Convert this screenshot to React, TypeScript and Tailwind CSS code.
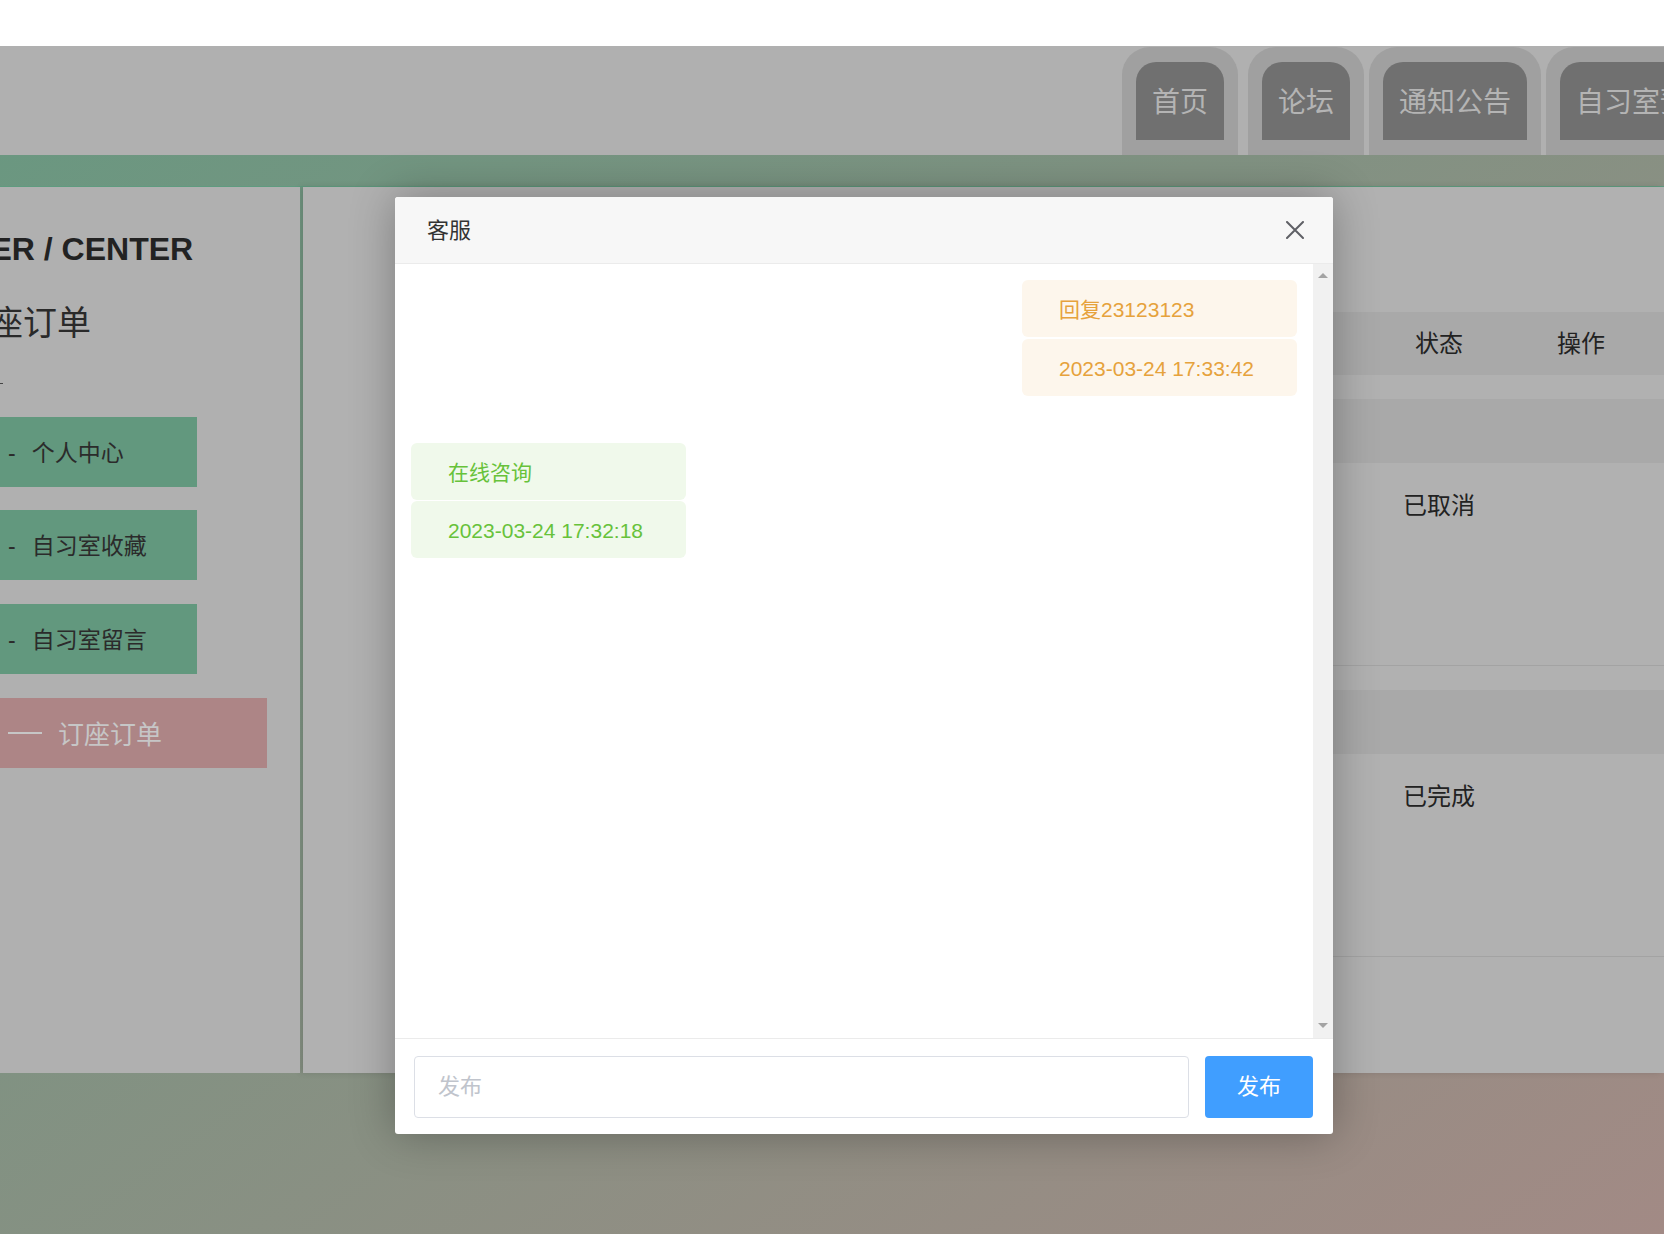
import React from "react";

function Tab({ label, first }: { label: string; first?: boolean }) {
  return (
    <div
      className={`shrink-0 h-[108px] bg-[#a0a0a0] rounded-t-[28px] px-[14px] pt-[15px] pb-[15px] ${first ? "mr-[5px]" : ""}`}
    >
      <div className="h-[78px] bg-[#707070] rounded-t-[20px] px-[16px] pt-[3px] flex items-center justify-center text-[28px] text-[#b4b4b4] whitespace-nowrap">
        {label}
      </div>
    </div>
  );
}

function MenuItem({ label, className = "" }: { label: string; className?: string }) {
  return (
    <div
      className={`h-[70px] w-[197px] bg-[#62987e] flex items-center pl-[8px] pt-[3px] text-[23px] text-[#2b2b2b] ${className}`}
    >
      <span className="leading-none">-</span>
      <span className="ml-[16px]">{label}</span>
    </div>
  );
}

function OrderRow({ status }: { status: string }) {
  return (
    <div className="mt-[24px]">
      <div className="h-[64px] bg-[#a9a9a9]" />
      <div className="h-[203px] border-b border-[#a3a3a3] flex justify-end pr-[12px] pt-[27px]">
        <div className="w-[142px] text-center text-[24px] leading-[32px] text-[#222]">{status}</div>
        <div className="w-[142px]" />
      </div>
    </div>
  );
}

function Bubble({ text, tone }: { text: string; tone: "orange" | "green" }) {
  const cls =
    tone === "orange"
      ? "bg-[#fdf6ec] text-[#e6a23c]"
      : "bg-[#f0f9eb] text-[#67c23a]";
  return (
    <div className={`w-[275px] rounded-[6px] px-[37px] pt-[17px] pb-[15px] text-[21px] leading-[25px] whitespace-nowrap ${cls}`}>
      {text}
    </div>
  );
}

export default function App() {
  return (
    <div className="relative w-[1664px] h-[1234px] overflow-hidden bg-[linear-gradient(to_bottom_right,#679880,#a28a85)] font-['Liberation_Sans','Noto_Sans_CJK_SC',sans-serif]">
      {/* top white strip */}
      <div className="h-[46px] bg-white" />

      {/* header with tabs */}
      <header className="h-[109px] bg-[#b0b0b0] flex items-end pl-[1122px] gap-[5px] overflow-hidden">
        <Tab label="首页" first />
        <Tab label="论坛" />
        <Tab label="通知公告" />
        <Tab label="自习室预约" />
      </header>

      {/* green band */}
      <div className="h-[32px] border-b border-[#5f9b7f]" />

      {/* content */}
      <div className="flex h-[886px]">
        <aside className="relative w-[300px] shrink-0 bg-[#b0b0b0] overflow-hidden flex flex-col">
          <div className="mt-[44px] ml-[-54px] text-[32px] leading-[36px] font-bold text-[#222] whitespace-nowrap">
            USER / CENTER
          </div>
          <div className="mt-[36px] ml-[-45px] text-[34px] leading-[40px] text-[#2a2a2a] whitespace-nowrap">
            订座订单
          </div>
          <div className="mt-[40px] h-[1px] w-[3px] bg-[#444]" />
          <MenuItem label="个人中心" className="mt-[33px]" />
          <MenuItem label="自习室收藏" className="mt-[23px]" />
          <MenuItem label="自习室留言" className="mt-[24px]" />
          <div className="mt-[24px] h-[70px] w-[267px] bg-[#ad8586] flex items-center pl-[8px]">
            <div className="h-[2px] w-[34px] bg-[#c6c6c6]" />
            <span className="ml-[16px] pt-[5px] text-[26px] text-[#c6c6c6]">订座订单</span>
          </div>
        </aside>

        <main className="ml-[3px] flex-1 bg-[#b1b1b1] shadow-[-3px_0_6px_rgba(0,0,0,0.12)] pt-[125px] pl-[130px]">
          <div className="h-[63px] bg-[#a9a9a9] flex items-center justify-end pr-[12px] text-[24px] text-[#222]">
            <div className="w-[142px] text-center">状态</div>
            <div className="w-[142px] text-center">操作</div>
          </div>
          <OrderRow status="已取消" />
          <OrderRow status="已完成" />
        </main>
      </div>

      {/* dialog */}
      <div className="absolute left-[395px] top-[197px] w-[938px] h-[937px] bg-white rounded-[3px] shadow-[0_0_45px_rgba(0,0,0,0.3)] flex flex-col overflow-hidden">
        <div className="h-[67px] shrink-0 bg-[#f7f7f7] border-b border-[#ebebeb] flex items-center justify-between pl-[32px] pr-[29px]">
          <span className="text-[22px] text-[#333]">客服</span>
          <svg width="18" height="18" viewBox="0 0 18 18" fill="none">
            <path d="M1 1L17 17M17 1L1 17" stroke="#5f6066" strokeWidth="2" strokeLinecap="round" />
          </svg>
        </div>

        <div className="flex-1 flex min-h-0">
          <div className="flex-1 px-[16px] pt-[16px]">
            <div className="flex flex-col items-end gap-[2px]">
              <Bubble tone="orange" text="回复23123123" />
              <Bubble tone="orange" text="2023-03-24 17:33:42" />
            </div>
            <div className="mt-[47px] flex flex-col items-start gap-[1px]">
              <Bubble tone="green" text="在线咨询" />
              <Bubble tone="green" text="2023-03-24 17:32:18" />
            </div>
          </div>
          <div className="w-[20px] shrink-0 bg-[#f1f1f1] flex flex-col items-center justify-between pt-[9px] pb-[10px]">
            <svg width="10" height="5" viewBox="0 0 10 5">
              <path d="M0 5L5 0L10 5Z" fill="#a3a3a3" />
            </svg>
            <svg width="10" height="5" viewBox="0 0 10 5">
              <path d="M0 0L10 0L5 5Z" fill="#a3a3a3" />
            </svg>
          </div>
        </div>

        <div className="h-[96px] shrink-0 border-t border-[#ebebeb] flex items-center pl-[19px] pr-[20px] gap-[16px]">
          <input
            placeholder="发布"
            className="flex-1 h-[62px] border border-[#dcdfe6] rounded-[4px] px-[23px] text-[22px] text-[#606266] placeholder:text-[#c0c4cc] outline-none"
          />
          <button className="w-[108px] h-[62px] bg-[#409eff] text-white text-[22px] rounded-[4px]">
            发布
          </button>
        </div>
      </div>
    </div>
  );
}
